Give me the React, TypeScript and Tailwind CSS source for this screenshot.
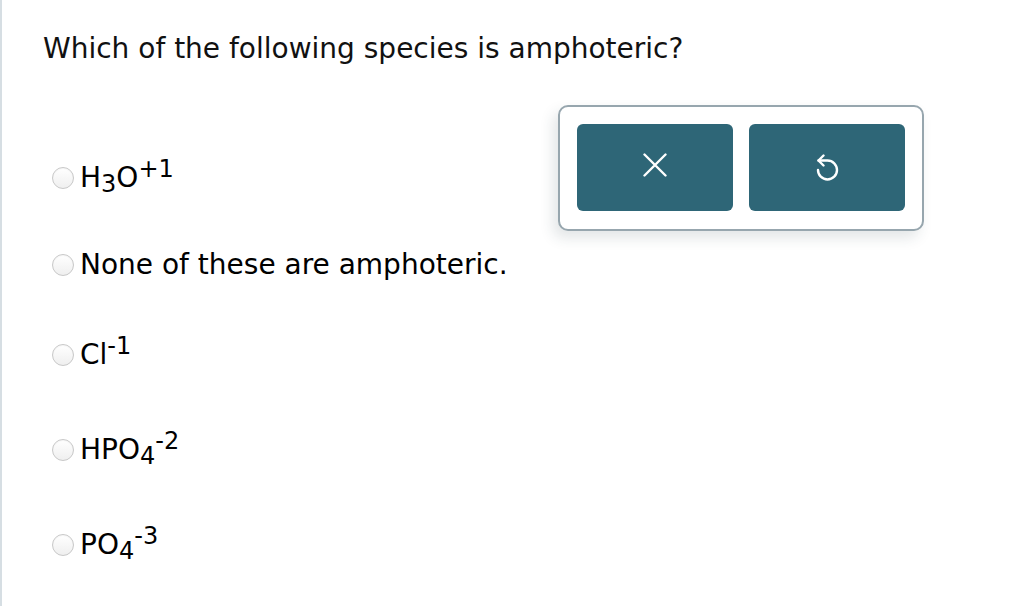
import React from "react";

const font = { fontFamily: '"DejaVu Sans", Verdana, sans-serif' };

function Radio() {
  return (
    <div className="h-[22px] w-[22px] shrink-0 rounded-full border border-[#c8c8c8] bg-gradient-to-b from-white to-[#efefef] shadow-[inset_0_1px_1px_rgba(0,0,0,0.04)]" />
  );
}

function Row({ children, className }: { children: React.ReactNode; className: string }) {
  return (
    <div className={`flex h-[40px] items-center gap-[6px] pl-[9px] ${className}`}>
      <Radio />
      <span className="text-[28px] leading-[32px] text-black">{children}</span>
    </div>
  );
}

function Sub({ children }: { children: React.ReactNode }) {
  return <sub className="bottom-[-0.22em] text-[24px]">{children}</sub>;
}

function Sup({ children }: { children: React.ReactNode }) {
  return <sup className="top-[-0.42em] text-[24px]">{children}</sup>;
}

export default function App() {
  return (
    <div className="h-[606px] w-full overflow-hidden border-l-2 border-[#d6dee3] bg-white pl-[41px] pt-[33px]" style={font}>
      <h1 className="text-[28px] font-normal leading-[32px] text-[#111]">Which of the following species is amphoteric?</h1>
      <div className="mt-[40px] flex">
        <div className="w-[515px] shrink-0 pt-[53px]">
          <Row className="">
            H<Sub>3</Sub>O<Sup>+1</Sup>
          </Row>
          <Row className="mt-[47px]">None of these are amphoteric.</Row>
          <Row className="mt-[50px]">
            Cl<Sup>-1</Sup>
          </Row>
          <Row className="mt-[55px]">
            HPO<Sub>4</Sub>
            <Sup>-2</Sup>
          </Row>
          <Row className="mt-[55px]">
            PO<Sub>4</Sub>
            <Sup>-3</Sup>
          </Row>
        </div>
        <div className="flex h-[126px] w-[366px] shrink-0 gap-[16px] rounded-[10px] border-2 border-[#97a6ae] bg-white px-[17px] pb-[18px] pt-[17px] shadow-[-5px_7px_14px_rgba(40,60,70,0.13)]">
          <button className="flex h-[87px] w-[156px] items-center justify-center rounded-[6px] bg-[#2e6677] pb-[6px]">
            <svg width="24" height="24" viewBox="0 0 24 24" fill="none" stroke="white" strokeWidth="2.4" strokeLinecap="round">
              <path d="M1.5 1.5 L22.5 22.5 M22.5 1.5 L1.5 22.5" />
            </svg>
          </button>
          <button className="flex h-[87px] w-[156px] items-center justify-center rounded-[6px] bg-[#2e6677]">
            <svg width="28" height="28" viewBox="0 0 28 28" fill="none" stroke="white" strokeWidth="2.4" strokeLinecap="round" strokeLinejoin="round">
              <path d="M10.5 1.5 L5.5 6.5 L10.5 11.5" />
              <path d="M5.5 6.5 H14.5 A9.5 9.5 0 1 1 5 16" />
            </svg>
          </button>
        </div>
      </div>
    </div>
  );
}
